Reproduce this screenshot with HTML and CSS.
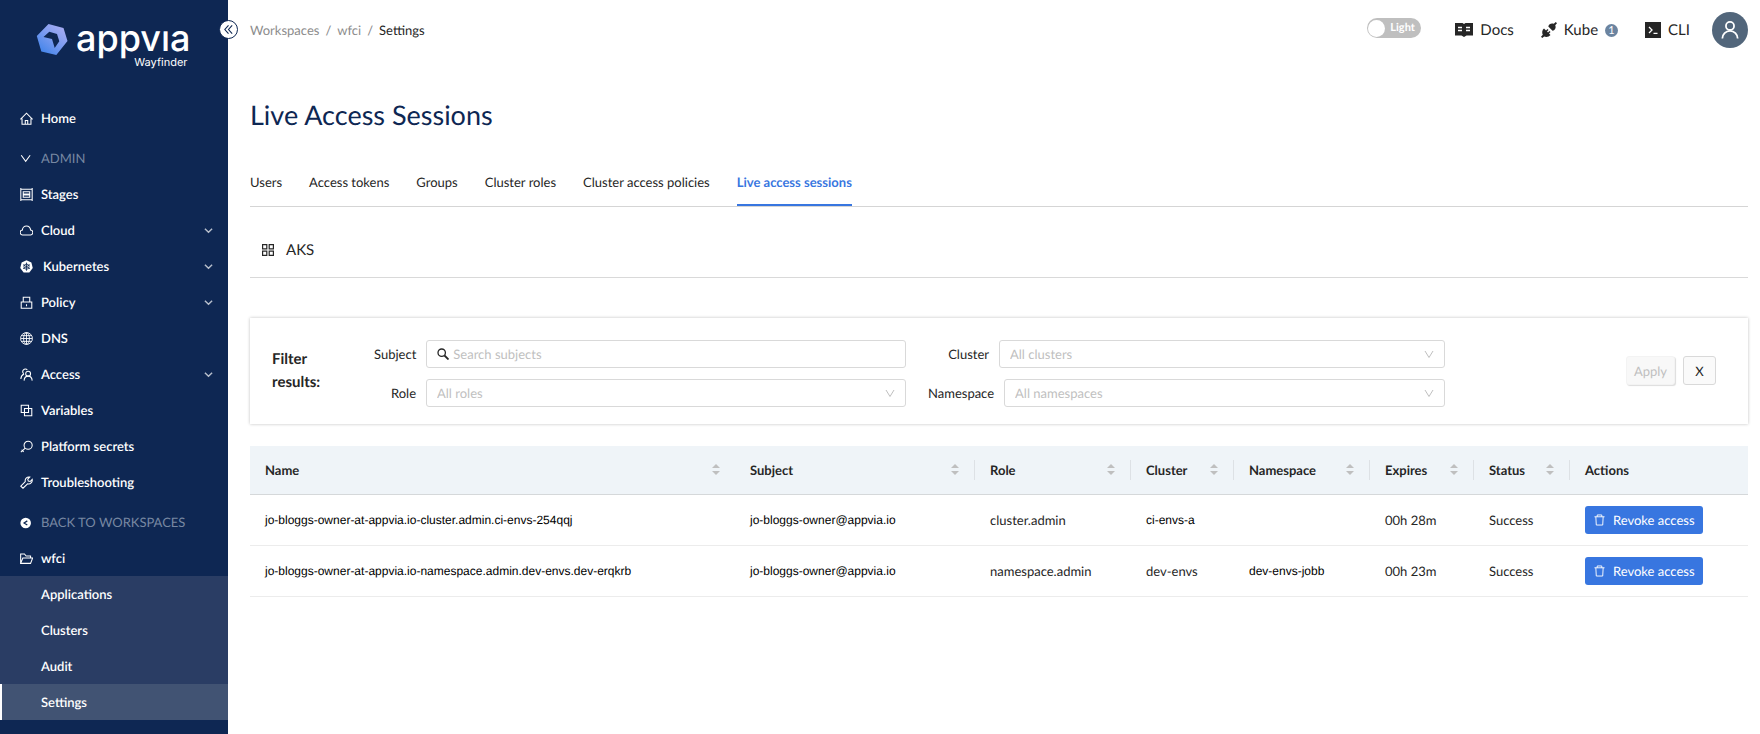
FILE: index.html
```html
<!DOCTYPE html>
<html lang="en">
<head>
<meta charset="utf-8">
<meta name="viewport" content="width=device-width, initial-scale=1">
<title>Live Access Sessions</title>
<link rel="stylesheet" href="styles.css">
</head>
<body>
<div class="app">
  <aside class="sidebar">
    <a class="brand" href="#">
      <svg class="brand-mark" viewBox="0 0 32 32" aria-hidden="true">
        <defs><linearGradient id="mark" x1="1" y1="0" x2="0.2" y2="1"><stop offset="0" stop-color="#b3b0f3"/><stop offset="0.5" stop-color="#7f9df0"/><stop offset="1" stop-color="#3f83ea"/></linearGradient></defs>
        <path fill="url(#mark)" fill-rule="evenodd" d="M12.500 1 27.500 5 31.500 18 20.300 32 5.300 28.500.8 13ZM7.500 14 16 16 18.700 25 23.300 18.300 21 11 13.300 8.800Z"/>
      </svg>
      <span class="brand-text"><span class="brand-name">appvıa</span><span class="brand-sub">Wayfinder</span></span>
    </a>
    <button class="collapse" type="button" aria-label="Collapse menu">
      <svg viewBox="0 0 12 12" fill="none" stroke="currentColor" stroke-width="1.200"><path d="M6 1.500 2 6l4 4.500M10 1.500 6 6l4 4.500"/></svg>
    </button>
    <nav class="nav">
      <a class="item" href="#"><svg class="icon" viewBox="0 0 16 16"><path d="M.5 9 8 1.500 15.500 9M2.500 8v7h11V8M6.500 15v-4.500h3V15"/></svg>Home</a>
      <button class="item heading" type="button"><svg class="icon" viewBox="0 0 16 16"><path d="M1.500 4 7 11.500 12.500 4"/></svg>ADMIN</button>
      <a class="item" href="#"><svg class="icon" viewBox="0 0 16 16"><path d="M1 0v16M15 0v16M1 1.500h14M1 14.500h14M4 4.500h8v3H4zM4 8.500h8v3H4z"/></svg>Stages</a>
      <a class="item" href="#"><svg class="icon" viewBox="0 0 16 16"><path d="M3.500 13.500h9a3 3 0 0 0 .5-6 5 5 0 0 0-10 0 3 3 0 0 0 .5 6z"/></svg>Cloud<svg class="chev" viewBox="0 0 10 10"><path d="M1 3 5 7 9 3"/></svg></a>
      <a class="item wide" href="#"><svg class="icon" viewBox="0 0 16 16"><path class="solid" d="M8 .3 14 3 15.700 9.800 11.500 15.500h-7L.3 9.800 2 3Z"/><g class="dark"><circle cx="8" cy="8.200" r="3.200"/><path d="M8 3.200v10M3.700 5.700l8.600 5M12.300 5.700l-8.600 5"/></g></svg>Kubernetes<svg class="chev" viewBox="0 0 10 10"><path d="M1 3 5 7 9 3"/></svg></a>
      <a class="item" href="#"><svg class="icon" viewBox="0 0 16 16"><path d="M1.500 7.500h13v7.500h-13zM4 7.500V1.500h8v6M8 10v2.500"/></svg>Policy<svg class="chev" viewBox="0 0 10 10"><path d="M1 3 5 7 9 3"/></svg></a>
      <a class="item" href="#"><svg class="icon thin" viewBox="0 0 16 16"><circle cx="8" cy="8" r="7.300"/><ellipse cx="8" cy="8" rx="3.600" ry="7.300"/><path d="M1 8h14M2 4.500h12M2 11.500h12M8 1v14"/></svg>DNS</a>
      <a class="item" href="#"><svg class="icon" viewBox="0 0 16 16"><circle cx="10" cy="7" r="3"/><path d="M5 15.500c.3-3.500 2.300-5.500 5-5.500s4.700 2 5 5.500M9 2.500A3.200 3.200 0 1 0 4.500 7M1 13.500c.2-3 1.500-5 4-6"/></svg>Access<svg class="chev" viewBox="0 0 10 10"><path d="M1 3 5 7 9 3"/></svg></a>
      <a class="item" href="#"><svg class="icon" viewBox="0 0 16 16"><path d="M1.500 1.500h9v9h-9zM5.500 5.500h9v9h-9z"/></svg>Variables</a>
      <a class="item" href="#"><svg class="icon" viewBox="0 0 16 16"><circle cx="10" cy="6.500" r="5"/><path d="M6.500 10 1 15M2 12l2.500 2.500"/></svg>Platform secrets</a>
      <a class="item" href="#"><svg class="icon" viewBox="0 0 16 16"><path d="M1 12.500 6.500 7C5.700 3.500 8.500.7 12 1.300L9.500 4l.7 2.300 2.300.5 2.500-2.600c.6 3.500-2.300 6.300-5.700 5.500L3.700 15z"/></svg>Troubleshooting</a>
      <a class="item heading" href="#"><svg class="icon" viewBox="0 0 16 16"><circle class="solid" cx="7" cy="8.500" r="6.500"/><path class="dark-line" d="M9 6 5 8.500 9 11"/></svg>BACK TO WORKSPACES</a>
      <a class="item" href="#"><svg class="icon" viewBox="0 0 16 16"><path d="M.8 14V2.500h4.700l2 2.500H13v2M.8 14 3.500 7.500h12L13 14z"/></svg>wfci</a>
      <div class="subnav">
        <a class="item" href="#">Applications</a>
        <a class="item" href="#">Clusters</a>
        <a class="item" href="#">Audit</a>
        <a class="item current" href="#" aria-current="page">Settings</a>
      </div>
    </nav>
  </aside>

  <div class="page">
    <header class="topbar">
      <nav class="crumbs" aria-label="Breadcrumb"><a href="#">Workspaces</a><span>/</span><a href="#">wfci</a><span>/</span><a class="here" href="#">Settings</a></nav>
      <div class="tools">
        <button class="switch" type="button" role="switch" aria-checked="false"><span class="knob"></span>Light</button>
        <a class="tool" href="#"><svg class="tool-icon" viewBox="0 0 18 16"><path fill="currentColor" d="M0 1h7.500L9 2l1.500-1H18v12.500h-6.500L9 15l-2.500-1.500H0z"/><path stroke="#fff" stroke-width="1.500" d="M3 5.500h4M3 8.500h4M11 5.500h4M11 8.500h4"/></svg>Docs</a>
        <a class="tool" href="#"><svg class="tool-icon narrow" viewBox="0 0 16 16"><g fill="currentColor"><path d="M7.300 4.500 11.500 8.700c3-.5 3.700-3.500 2.700-5.500L16 1.200 14.800 0l-2 1.800c-2.300-.8-5 0-5.500 2.700z"/><path d="M3 6.500 5 8.500l1.500-1.500 1 1L6 9.500 7 10.500 8.500 9l1 1L8 11.500l1.500 1.500c-1.500 2-4.500 2.500-6.300 1.500L1.200 16 0 14.800l1.800-2C.8 11 1 8 3 6.500z"/></g></svg>Kube<span class="count">1</span></a>
        <a class="tool" href="#"><svg class="tool-icon narrow" viewBox="0 0 16 16"><path fill="currentColor" d="M0 0h16v16H0z"/><path fill="none" stroke="#fff" stroke-width="1.300" d="M4 5l3 3-3 3M8.500 11.300h4"/></svg>CLI</a>
        <button class="avatar" type="button" aria-label="Account"><svg viewBox="0 0 20 20" fill="none" stroke="#fff" stroke-width="2"><circle cx="10" cy="5.500" r="4.500"/><path d="M1.500 19.500a8.500 8.500 0 0 1 17 0"/></svg></button>
      </div>
    </header>

    <main class="main">
      <h1>Live Access Sessions</h1>
      <nav class="tabs"><a href="#">Users</a><a href="#">Access tokens</a><a href="#">Groups</a><a href="#">Cluster roles</a><a href="#">Cluster access policies</a><a class="active" href="#" aria-current="page">Live access sessions</a></nav>
      <h2 class="provider"><svg viewBox="0 0 12 12" fill="none" stroke="currentColor" stroke-width="1.200"><path d="M.6.600h4.200v4.200H.6zM7.200.600h4.200v4.200H7.200zM.6 7.200h4.200v4.200H.6zM7.200 7.200h4.200v4.200H7.200z"/></svg>AKS</h2>

      <form class="filters">
        <p class="filters-title">Filter results:</p>
        <div class="fields">
          <div class="field"><label for="subject">Subject</label><div class="control search"><svg viewBox="0 0 12 12"><circle cx="4.700" cy="4.700" r="3.700"/><path stroke-width="1.800" d="m7.500 7.500 4 4"/></svg><input id="subject" type="text" placeholder="Search subjects"></div></div>
          <div class="field"><label for="role">Role</label><div class="control"><select id="role"><option>All roles</option></select><svg viewBox="0 0 10 10"><path d="M1 2 5 8.500 9 2"/></svg></div></div>
        </div>
        <div class="fields second">
          <div class="field"><label for="cluster">Cluster</label><div class="control"><select id="cluster"><option>All clusters</option></select><svg viewBox="0 0 10 10"><path d="M1 2 5 8.500 9 2"/></svg></div></div>
          <div class="field"><label for="namespace">Namespace</label><div class="control"><select id="namespace"><option>All namespaces</option></select><svg viewBox="0 0 10 10"><path d="M1 2 5 8.500 9 2"/></svg></div></div>
        </div>
        <div class="filter-actions"><button class="apply" type="submit" disabled>Apply</button><button class="clear" type="reset">X</button></div>
      </form>

      <table class="sessions">
        <colgroup><col><col class="c-subject"><col class="c-role"><col class="c-cluster"><col class="c-namespace"><col class="c-expires"><col class="c-status"><col class="c-actions"></colgroup>
        <thead><tr>
          <th><div class="th">Name<i class="sort"></i></div></th>
          <th><div class="th ruled">Subject<i class="sort"></i></div></th>
          <th><div class="th ruled">Role<i class="sort"></i></div></th>
          <th><div class="th ruled">Cluster<i class="sort"></i></div></th>
          <th><div class="th ruled">Namespace<i class="sort"></i></div></th>
          <th><div class="th ruled">Expires<i class="sort"></i></div></th>
          <th><div class="th ruled">Status<i class="sort"></i></div></th>
          <th><div class="th">Actions</div></th>
        </tr></thead>
        <tbody>
          <tr><td class="plain">jo-bloggs-owner-at-appvia.io-cluster.admin.ci-envs-254qqj</td><td class="plain">jo-bloggs-owner@appvia.io</td><td>cluster.admin</td><td class="plain">ci-envs-a</td><td></td><td>00h 28m</td><td>Success</td><td><button class="revoke" type="button"><svg viewBox="0 0 12 12"><path d="M.5 2.500h11M3.500 2.500v-2h5v2M2 2.500l.5 9h7l.5-9"/></svg>Revoke access</button></td></tr>
          <tr><td class="plain">jo-bloggs-owner-at-appvia.io-namespace.admin.dev-envs.dev-erqkrb</td><td class="plain">jo-bloggs-owner@appvia.io</td><td>namespace.admin</td><td>dev-envs</td><td class="plain">dev-envs-jobb</td><td>00h 23m</td><td>Success</td><td><button class="revoke" type="button"><svg viewBox="0 0 12 12"><path d="M.5 2.500h11M3.500 2.500v-2h5v2M2 2.500l.5 9h7l.5-9"/></svg>Revoke access</button></td></tr>
        </tbody>
      </table>
    </main>
  </div>
</div>
</body>
</html>
```
FILE: styles.css
```css
* { box-sizing: border-box; }
body { margin: 0; background: #fff; color: #262626; font: 13px/20px Lato, "Liberation Sans", sans-serif; text-rendering: geometricPrecision; }
a { color: inherit; text-decoration: none; }
button, input, select { font: inherit; color: inherit; margin: 0; text-rendering: inherit; }
button { cursor: pointer; }

.app { display: flex; min-height: 100vh; }

/* Sidebar */
.sidebar { position: relative; flex: 0 0 228px; background: #0e2753; color: #fff; }
.brand { display: flex; gap: 8px; padding: 23px 0 0 36px; height: 100px; }
.brand-mark { width: 32px; height: 32px; }
.brand-text { display: flex; flex-direction: column; }
.brand-name { font: 500 36px/31px Inter, sans-serif; }
.brand-sub { font: 11px/16px Inter, sans-serif; text-align: right; padding-right: 3px; }
.collapse { position: absolute; top: 20px; right: -10px; display: flex; align-items: center; justify-content: center; width: 19px; height: 19px; padding: 0; border: 1px solid #0e2753; border-radius: 50%; background: #fff; color: #0e2753; }
.collapse svg { width: 11px; height: 11px; }
.nav { display: flex; flex-direction: column; }
.item { display: flex; align-items: center; gap: 8px; height: 36px; padding: 0 15px 0 20px; border: 0; background: none; color: #fff; font-weight: 600; text-align: left; }
.item.heading { margin-top: 4px; color: #7787a2; font-weight: 400; }
.item.wide { gap: 10px; }
.icon { width: 13px; height: 13px; fill: none; stroke: #fff; stroke-width: 1.300; }
.icon.thin { stroke-width: 1.100; }
.icon .solid { fill: #fff; stroke: none; }
.icon .dark { stroke: #0e2753; stroke-width: 1; }
.icon .dark-line { stroke: #0e2753; stroke-width: 1.500; }
.chev { width: 9px; height: 9px; margin-left: auto; fill: none; stroke: #b7bfcc; stroke-width: 1.600; }
.subnav { background: #2a3d64; }
.subnav .item { padding-left: 41px; }
.subnav .current { background: #415373; box-shadow: inset 2px 0 #fff; }

/* Top bar */
.page { flex: 1; min-width: 0; padding: 0 12px 0 22px; }
.topbar { display: flex; align-items: center; justify-content: space-between; height: 60px; }
.crumbs { display: flex; gap: 6px; color: #8c8c8c; }
.crumbs .here { color: #262626; }
.tools { display: flex; align-items: center; }
.switch { display: flex; align-items: center; gap: 5px; width: 54px; height: 20px; margin: 0 34px 4px 0; padding: 0 1px; border: 0; border-radius: 10px; background: #bfbfbf; color: #fff; font-size: 11px; font-weight: 700; }
.knob { width: 17px; height: 17px; border-radius: 50%; background: #fff; }
.tool { display: flex; align-items: center; gap: 7px; margin-right: 27px; font-size: 15px; }
.tool:last-of-type { margin-right: 22px; }
.tool-icon { width: 18px; height: 16px; }
.tool-icon.narrow { width: 16px; }
.count { width: 13px; height: 13px; border-radius: 50%; background: #6b84a0; color: #fff; font-size: 11px; line-height: 13px; text-align: center; }
.avatar { display: flex; align-items: center; justify-content: center; width: 36px; height: 36px; padding: 0; border: 0; border-radius: 50%; background: #52667b; }
.avatar svg { width: 18px; height: 20px; }

/* Content */
h1 { margin: 35px 0 0; color: #0e2753; font-size: 27px; line-height: 40px; font-weight: 400; }
.tabs { display: flex; gap: 27px; margin-top: 26px; border-bottom: 1px solid #d5d5d5; }
.tabs a { padding: 11px 0 14px; }
.tabs .active { padding-bottom: 12px; border-bottom: 2px solid #3876e0; color: #3876e0; font-weight: 700; }
.provider { display: flex; align-items: center; gap: 12px; height: 71px; margin: 0; padding: 16px 12px 0; border-bottom: 1px solid #d9d9d9; font-size: 15px; font-weight: 400; }
.provider svg { width: 12px; height: 12px; }

.filters { display: grid; grid-template-columns: 80px minmax(0, 532fr) minmax(0, 517fr) minmax(0, 249fr); column-gap: 22px; align-items: start; margin: 40px 0 22px; padding: 22px 32px 17px 22px; box-shadow: 0 0 3px rgba(0, 0, 0, .25); }
.filters-title { width: 60px; margin: 8px 0 0; font-size: 15px; line-height: 23px; font-weight: 700; }
.fields { display: grid; gap: 11px; }
.field { display: flex; align-items: center; gap: 10px; }
.field label { min-width: 42px; text-align: right; }
.fields.second label { min-width: 61px; }
.control { display: flex; align-items: center; flex: 1; min-width: 0; height: 28px; padding: 0 10px; border: 1px solid #d9d9d9; border-radius: 3px; }
.control svg { flex: none; width: 10px; height: 10px; fill: none; stroke: #bfbfbf; }
.control.search svg { width: 12px; height: 12px; margin-right: 4px; stroke: #262626; stroke-width: 1.300; }
.control input, .control select { flex: 1; min-width: 0; padding: 0; border: 0; outline: 0; background: none; appearance: none; }
.control select, .control input::placeholder { color: #bfbfbf; }
.filter-actions { display: flex; justify-content: flex-end; gap: 8px; margin-top: 16px; }
.filter-actions button { height: 29px; padding: 0 7px; border: 1px solid #d9d9d9; border-radius: 3px; background: #fafafa; }
.filter-actions .apply { border-color: #f3f3f3; background: #f8f8f8; color: #bfbfbf; box-shadow: 1px 1px 1px #ddd; }
.filter-actions .clear { width: 33px; }

.sessions { width: 100%; table-layout: fixed; border-collapse: collapse; }
.c-subject { width: 240px; }
.c-role { width: 156px; }
.c-cluster { width: 103px; }
.c-namespace { width: 136px; }
.c-expires { width: 104px; }
.c-status { width: 96px; }
.c-actions { width: 178px; }
.sessions th { height: 48px; padding: 0; background: #eff4f8; border-bottom: 1px solid #d5d8da; font-weight: 700; text-align: left; }
.th { display: flex; align-items: center; justify-content: space-between; padding: 0 15px; }
.th.ruled { border-right: 1px solid #dde1e5; }
.sort { display: grid; gap: 3px; }
.sort::before, .sort::after { content: ""; border: 4px solid transparent; }
.sort::before { border-top: 0; border-bottom-color: #bfbfbf; }
.sort::after { border-bottom: 0; border-top-color: #bfbfbf; }
.sessions td { padding: 11px 15px; border-bottom: 1px solid #ececec; white-space: nowrap; }
.sessions .plain { font-family: "Liberation Sans", sans-serif; font-size: 12px; color: #000; }
.revoke { display: flex; align-items: center; gap: 8px; height: 28px; padding: 0 8px 0 9px; border: 0; border-radius: 3px; background: #3876e0; color: #fff; }
.revoke svg { width: 11px; height: 12px; fill: none; stroke: #fff; }
```
